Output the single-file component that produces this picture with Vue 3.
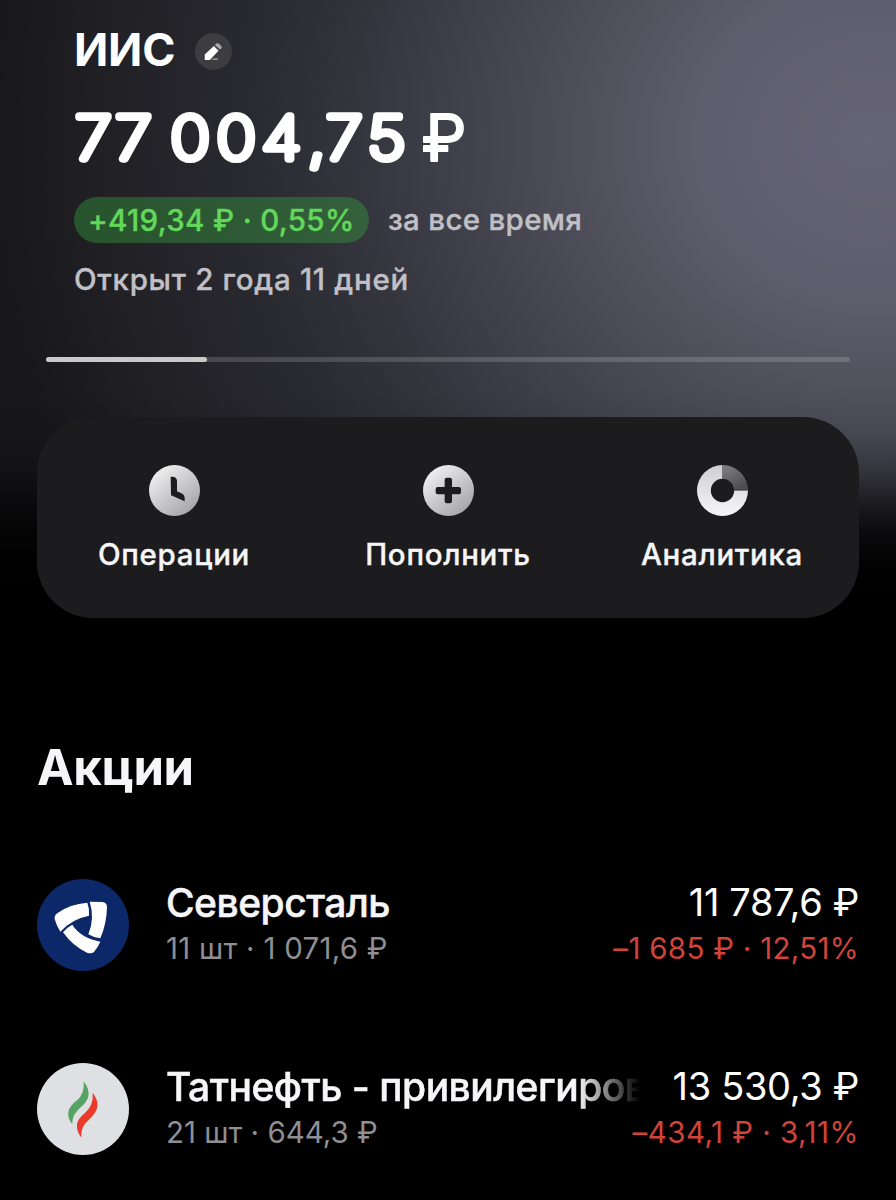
<template>
  <div class="app">
    <header class="account">
      <div class="account-title">
        <h1>ИИС</h1>
        <button class="edit" aria-label="Изменить">
          <svg viewBox="0 0 110 110">
            <path d="M29 64 56 39 70 53 44 80H29z" fill="#fff" />
            <path d="M59 36l5-5q3-3 6 0l8 8q3 3 0 6l-4 4z" fill="#aaaaae" />
            <path d="M54 75h14v5H49z" fill="#929296" />
          </svg>
        </button>
      </div>

      <svg class="balance" viewBox="0 0 420 84">
        <text y="61.6" transform="scale(1.13 1)">
          <tspan x="1.2 36.6">77</tspan>
          <tspan x="85.4 126 166 207 223 260">004,75</tspan>
        </text>
        <text class="currency" x="347.5" y="64">₽</text>
      </svg>

      <div class="profit">
        <span class="badge">+419,34 ₽ · 0,55%</span>
        <span class="period">за все время</span>
      </div>
      <p class="opened">Открыт 2 года 11 дней</p>
    </header>

    <div class="progress">
      <div class="progress-fill" :style="{ width: progress + '%' }"></div>
    </div>

    <nav class="actions">
      <button v-for="action in actions" :key="action.icon" class="action">
        <svg viewBox="0 0 153 153">
          <defs>
            <linearGradient id="silver" x1="0.15" y1="0.1" x2="0.85" y2="0.95">
              <stop offset="0" stop-color="#efeff0" />
              <stop offset="1" stop-color="#a3a3a5" />
            </linearGradient>
            <linearGradient id="ring" x1="0" y1="0" x2="0" y2="1">
              <stop offset="0" stop-color="#cfcfd1" />
              <stop offset="1" stop-color="#f6f6f7" />
            </linearGradient>
            <linearGradient id="slice" x1="0" y1="0" x2="0.6" y2="1">
              <stop offset="0" stop-color="#828284" />
              <stop offset="1" stop-color="#4e4e50" />
            </linearGradient>
          </defs>
          <template v-if="action.icon === 'chart'">
            <path
              d="M76.5 0A76.5 76.5 0 1 0 153 76.5H111.5A35 35 0 1 1 76.5 41.5z"
              fill="url(#ring)"
            />
            <path
              d="M77.5 0A76.5 76.5 0 0 1 153 74H111.5A35 35 0 0 0 77.5 41.5z"
              fill="url(#slice)"
            />
          </template>
          <template v-else>
            <circle cx="76.5" cy="76.5" r="76.5" fill="url(#silver)" />
            <path
              v-if="action.icon === 'clock'"
              d="M65 35h7q12 2 12 13v31l16 7q7 4 7 12v11L66 91z"
              fill="#1c1c1e"
            />
            <path
              v-else
              d="M65 44q0-6 6-6h10q6 0 6 6v22h21q6 0 6 6v10q0 6-6 6H87v21q0 6-6 6H71q-6 0-6-6V88H44q-6 0-6-6V72q0-6 6-6h21z"
              fill="#1c1c1e"
            />
          </template>
        </svg>
        <span>{{ action.label }}</span>
      </button>
    </nav>

    <section class="stocks">
      <h2>Акции</h2>
      <article v-for="stock in stocks" :key="stock.id" class="stock" :class="stock.id">
        <svg v-if="stock.id === 'severstal'" class="logo" viewBox="0 0 276 276">
          <circle cx="138" cy="138" r="138" fill="#0d2868" />
          <g fill="#fff">
            <path d="M53 120q-2-11 9-18 36-27 89-31 7 18 5 39-52 10-86 48-12-18-17-38z" />
            <path d="M158 68l38 1q14 1 14 15-1 50-20 94-20-2-36-12 20-48 4-98z" />
            <path d="M78 160q10-14 28-23 24 39 84 51-8 18-19 31-8 7-21 2-42-19-72-61z" />
          </g>
        </svg>
        <svg v-else class="logo" viewBox="0 0 276 276">
          <circle cx="138" cy="138" r="138" fill="#dfe0e4" />
          <path
            d="M140 55q18 23 14 45-4 18-26 36-24 22-22 48-14-16-12-36 2-18 26-36 24-20 20-57z"
            fill="#55a463"
          />
          <path
            d="M167 90q17 20 14 42-3 18-27 40-24 20-21 52-15-18-13-40 2-16 26-36 24-22 21-58z"
            fill="#e93a2a"
          />
        </svg>
        <div class="stock-body">
          <div class="stock-row">
            <h3>{{ stock.name }}</h3>
            <strong>{{ stock.total }}</strong>
          </div>
          <div class="stock-row">
            <p class="amount">{{ stock.amount }}</p>
            <p class="change">{{ stock.change }}</p>
          </div>
        </div>
      </article>
    </section>
  </div>
</template>

<script setup>
const progress = 20

const actions = [
  { icon: 'clock', label: 'Операции' },
  { icon: 'plus', label: 'Пополнить' },
  { icon: 'chart', label: 'Аналитика' },
]

const stocks = [
  {
    id: 'severstal',
    name: 'Северсталь',
    amount: '11 шт · 1 071,6 ₽',
    total: '11 787,6 ₽',
    change: '–1 685 ₽ · 12,51%',
  },
  {
    id: 'tatneft',
    name: 'Татнефть - привилегиров',
    amount: '21 шт · 644,3 ₽',
    total: '13 530,3 ₽',
    change: '–434,1 ₽ · 3,11%',
  },
]
</script>

<style>
body {
  margin: 0;
  background: #000;
}
</style>

<style scoped>
.app {
  box-sizing: border-box;
  width: 896px;
  height: 1200px;
  padding: 28px 37px 0;
  overflow: hidden;
  font-family: Inter, 'Liberation Sans', sans-serif;
  color: #f6f6f8;
  background:
    linear-gradient(
      to bottom,
      rgba(0, 0, 0, 0) 390px,
      rgba(0, 0, 0, 0.06) 433px,
      rgba(0, 0, 0, 0.23) 467px,
      rgba(0, 0, 0, 0.55) 500px,
      rgba(0, 0, 0, 0.83) 533px,
      rgba(0, 0, 0, 0.96) 565px,
      #000 590px
    ),
    radial-gradient(
      ellipse 880px 800px at 870px 140px,
      #666477 0%,
      #5e5d6c 20%,
      #474752 41%,
      #34343d 59%,
      #2a2a31 70%,
      #202025 87%,
      #18181c 100%
    );
}

h1,
h2,
h3,
p {
  margin: 0;
}

button {
  padding: 0;
  border: 0;
  font: inherit;
  color: inherit;
  background: none;
}

.account {
  display: flex;
  flex-direction: column;
  padding-left: 37px;
}

.account-title {
  display: flex;
  height: 44px;
}

.account-title h1 {
  width: 120.5px;
  font-size: 45px;
  font-weight: 700;
  line-height: 44px;
  letter-spacing: -0.2px;
  color: #fff;
}

.edit {
  width: 37px;
  height: 37px;
  margin-top: 5px;
  border-radius: 50%;
  background: #3c3c41;
}

.edit svg {
  display: block;
  width: 37px;
  height: 37px;
}

.balance {
  width: 420px;
  height: 84px;
  margin-top: 25px;
  font-size: 59px;
  font-weight: 100;
  fill: #fff;
  stroke: #fff;
  stroke-width: 7.4px;
  stroke-linejoin: round;
}

.balance .currency {
  font-size: 64px;
  font-weight: 400;
  stroke-width: 1.8px;
}

.profit {
  display: flex;
  align-items: center;
  gap: 19px;
  height: 46px;
  margin-top: 15.5px;
  line-height: 46px;
}

.badge,
.period,
.opened,
.action {
  font-size: 29.5px;
  font-weight: 500;
  -webkit-text-stroke: 0.35px currentColor;
}

.badge {
  box-sizing: border-box;
  width: 295px;
  height: 46px;
  padding-left: 14px;
  border-radius: 23px;
  letter-spacing: 0.35px;
  white-space: nowrap;
  color: #62d75a;
  background: rgba(52, 160, 60, 0.42);
}

.period,
.opened {
  white-space: nowrap;
  color: #c0c0c6;
}

.period {
  line-height: 45px;
  letter-spacing: 0.3px;
}

.opened {
  margin-top: 18px;
  line-height: 36px;
  letter-spacing: 0.7px;
}

.progress {
  height: 5px;
  margin: 60.5px 9px 0;
  border-radius: 3px;
  background: rgba(255, 255, 255, 0.16);
}

.progress-fill {
  height: 100%;
  border-radius: 3px;
  background: #c9c9cb;
}

.actions {
  display: grid;
  grid-template-columns: repeat(3, 1fr);
  height: 201px;
  margin-top: 55px;
  border-radius: 56px;
  background: #1c1c1e;
}

.action {
  display: flex;
  flex-direction: column;
  align-items: center;
  padding-top: 48px;
  line-height: 38px;
  letter-spacing: 0.7px;
}

.action svg {
  width: 51px;
  height: 51px;
  margin-bottom: 19px;
}

.stocks h2 {
  margin: 119.5px 0 81px;
  font-size: 49px;
  font-weight: 700;
  line-height: 60px;
  letter-spacing: -0.3px;
}

.stock {
  display: flex;
  height: 92px;
  margin-bottom: 92px;
}

.logo {
  flex: none;
  width: 92px;
  height: 92px;
  margin-right: 37px;
}

.stock-body {
  flex: 1;
  min-width: 0;
}

.stock-row {
  display: flex;
  justify-content: space-between;
  white-space: nowrap;
}

.stock h3 {
  flex: 1;
  min-width: 0;
  overflow: hidden;
  font-size: 39px;
  font-weight: 500;
  line-height: 47px;
  letter-spacing: -0.5px;
  -webkit-text-stroke: 0.5px currentColor;
}

.stock strong {
  margin-left: 33px;
  font-size: 38px;
  font-weight: 400;
  line-height: 47px;
  letter-spacing: -0.35px;
  color: #fff;
}

.stock p {
  font-size: 29.5px;
  line-height: 44px;
}

.amount {
  color: #8e8e93;
}

.severstal .amount {
  letter-spacing: 0.25px;
}

.change {
  letter-spacing: 0.3px;
  color: #d2433a;
}

.tatneft .change {
  letter-spacing: 0.5px;
}

.tatneft h3 {
  -webkit-mask-image: linear-gradient(to right, #000 calc(100% - 62px), transparent);
  mask-image: linear-gradient(to right, #000 calc(100% - 62px), transparent);
}
</style>
